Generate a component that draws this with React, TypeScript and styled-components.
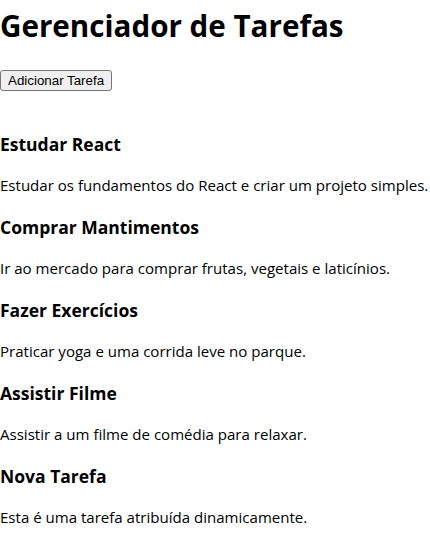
import React from "react";
import styled, { createGlobalStyle } from "styled-components";

const GlobalStyle = createGlobalStyle`
  html, body {
    margin: 0;
    padding: 0;
    background: #ffffff;
  }
  body {
    font-family: "Open Sans", "Noto Sans", sans-serif;
    color: #000000;
  }
`;

const Page = styled.div`
  display: flex;
  flex-direction: column;
  align-items: flex-start;
`;

const Title = styled.h1`
  margin: 5px 0 0 0;
  font-size: 29.6px;
  line-height: 42px;
  font-weight: 700;
`;

const AddButton = styled.button`
  margin-top: 23px;
  height: 21px;
  padding: 0 7px;
  border: 1px solid #767676;
  border-radius: 3px;
  background: #efefef;
  color: #000000;
  font-family: "Liberation Sans", Arial, sans-serif;
  font-size: 13.33px;
  line-height: 19px;
  cursor: pointer;
`;

const TaskList = styled.div`
  display: flex;
  flex-direction: column;
  gap: 19.5px;
  margin-top: 41px;
`;

const Task = styled.div`
  display: flex;
  flex-direction: column;
  gap: 16.5px;
`;

const TaskTitle = styled.h3`
  margin: 0;
  font-size: 17.5px;
  line-height: 25px;
  font-weight: 700;
`;

const TaskText = styled.p`
  margin: 0;
  font-size: 15.05px;
  line-height: 22px;
`;

const tasks = [
  { title: "Estudar React", text: "Estudar os fundamentos do React e criar um projeto simples." },
  { title: "Comprar Mantimentos", text: "Ir ao mercado para comprar frutas, vegetais e laticínios." },
  { title: "Fazer Exercícios", text: "Praticar yoga e uma corrida leve no parque." },
  { title: "Assistir Filme", text: "Assistir a um filme de comédia para relaxar." },
  { title: "Nova Tarefa", text: "Esta é uma tarefa atribuída dinamicamente." },
];

export default function App() {
  return (
    <>
      <GlobalStyle />
      <Page>
        <Title>Gerenciador de Tarefas</Title>
        <AddButton type="button">Adicionar Tarefa</AddButton>
        <TaskList>
          {tasks.map((t) => (
            <Task key={t.title}>
              <TaskTitle>{t.title}</TaskTitle>
              <TaskText>{t.text}</TaskText>
            </Task>
          ))}
        </TaskList>
      </Page>
    </>
  );
}
